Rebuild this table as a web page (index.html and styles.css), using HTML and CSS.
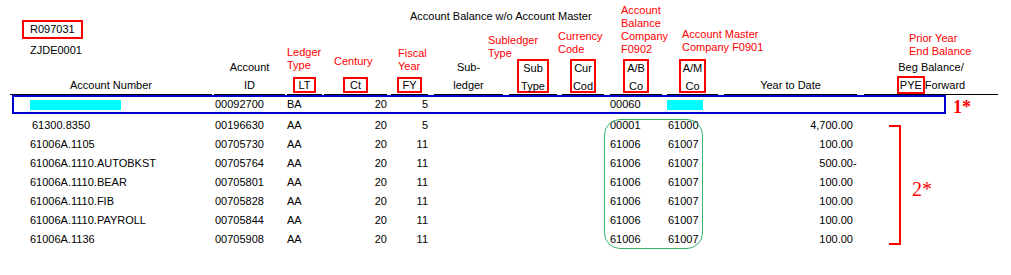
FILE: index.html
```html
<!DOCTYPE html>
<html>
<head>
<meta charset="utf-8">
<title>Account Balance w/o Account Master</title>
<link rel="stylesheet" href="styles.css">
</head>
<body>
<div class="page">
  <div class="hdr">
    <div class="hc c1">
      <div class="pbox">R097031</div>
      <div class="env">ZJDE0001</div>
      <div class="lbl">Account Number</div>
    </div>
    <div class="hc c2">
      <div class="lbl"><div>Account</div><div>ID</div></div>
    </div>
    <div class="hc c3">
      <div class="note n-lt">Ledger<br>Type</div>
      <div class="lbl"><span class="box1">LT</span></div>
    </div>
    <div class="hc c4">
      <div class="note n-ct">Century</div>
      <div class="lbl"><span class="box1 wide">Ct</span></div>
    </div>
    <div class="hc c5">
      <div class="title">Account Balance w/o Account Master</div>
      <div class="note n-fy">Fiscal<br>Year</div>
      <div class="lbl"><span class="box1">FY</span></div>
    </div>
    <div class="hc c6">
      <div class="lbl"><div>Sub-</div><div>ledger</div></div>
    </div>
    <div class="hc c7">
      <div class="note n-st">Subledger<br>Type</div>
      <div class="lbl"><span class="box2"><span class="bl">Sub</span><span class="bl">Type</span></span></div>
    </div>
    <div class="hc c8">
      <div class="note n-cc">Currency<br>Code</div>
      <div class="lbl"><span class="box2 tight"><span class="bl">Cur</span><span class="bl">Cod</span></span></div>
    </div>
    <div class="hc c9">
      <div class="note n-ab">Account<br>Balance<br>Company<br>F0902</div>
      <div class="lbl"><span class="box2"><span class="bl">A/B</span><span class="bl">Co</span></span></div>
    </div>
    <div class="hc c10">
      <div class="note n-am">Account Master<br>Company F0901</div>
      <div class="lbl"><span class="box2"><span class="bl">A/M</span><span class="bl">Co</span></span></div>
    </div>
    <div class="hc c11">
      <div class="lbl">Year to Date</div>
    </div>
    <div class="hc c12">
      <div class="note n-py">Prior Year<br>End Balance</div>
      <div class="lbl"><div>Beg Balance/</div><div class="pye-line"><span class="box-pye">PYE</span>Forward</div></div>
    </div>
  </div>

  <div class="hl-wrap">
    <div class="row row-hl">
      <div class="c c1 acct"><span class="redact wide-bar"></span></div>
      <div class="c c2 id">00092700</div>
      <div class="c c3">BA</div>
      <div class="c c4 r">20</div>
      <div class="c c5 r">5</div>
      <div class="c c6"></div>
      <div class="c c7"></div>
      <div class="c c8"></div>
      <div class="c c9">00060</div>
      <div class="c c10"><span class="redact short-bar"></span></div>
    </div>
    <span class="mark m1">1*</span>
  </div>

  <div class="body-area">
    <div class="rows">
      <div class="row">
        <div class="c c1 acct ind">61300.8350</div>
        <div class="c c2 id">00196630</div>
        <div class="c c3">AA</div>
        <div class="c c4 r">20</div>
        <div class="c c5 r">5</div>
        <div class="c c6"></div>
        <div class="c c7"></div>
        <div class="c c8"></div>
        <div class="c c9">00001</div>
        <div class="c c10 am">61000</div>
        <div class="c c11 r">4,700.00<span class="sign"></span></div>
      </div>
      <div class="row">
        <div class="c c1 acct">61006A.1105</div>
        <div class="c c2 id">00705730</div>
        <div class="c c3">AA</div>
        <div class="c c4 r">20</div>
        <div class="c c5 r">11</div>
        <div class="c c6"></div>
        <div class="c c7"></div>
        <div class="c c8"></div>
        <div class="c c9">61006</div>
        <div class="c c10 am">61007</div>
        <div class="c c11 r">100.00<span class="sign"></span></div>
      </div>
      <div class="row">
        <div class="c c1 acct">61006A.1110.AUTOBKST</div>
        <div class="c c2 id">00705764</div>
        <div class="c c3">AA</div>
        <div class="c c4 r">20</div>
        <div class="c c5 r">11</div>
        <div class="c c6"></div>
        <div class="c c7"></div>
        <div class="c c8"></div>
        <div class="c c9">61006</div>
        <div class="c c10 am">61007</div>
        <div class="c c11 r">500.00<span class="sign">-</span></div>
      </div>
      <div class="row">
        <div class="c c1 acct">61006A.1110.BEAR</div>
        <div class="c c2 id">00705801</div>
        <div class="c c3">AA</div>
        <div class="c c4 r">20</div>
        <div class="c c5 r">11</div>
        <div class="c c6"></div>
        <div class="c c7"></div>
        <div class="c c8"></div>
        <div class="c c9">61006</div>
        <div class="c c10 am">61007</div>
        <div class="c c11 r">100.00<span class="sign"></span></div>
      </div>
      <div class="row">
        <div class="c c1 acct">61006A.1110.FIB</div>
        <div class="c c2 id">00705828</div>
        <div class="c c3">AA</div>
        <div class="c c4 r">20</div>
        <div class="c c5 r">11</div>
        <div class="c c6"></div>
        <div class="c c7"></div>
        <div class="c c8"></div>
        <div class="c c9">61006</div>
        <div class="c c10 am">61007</div>
        <div class="c c11 r">100.00<span class="sign"></span></div>
      </div>
      <div class="row">
        <div class="c c1 acct">61006A.1110.PAYROLL</div>
        <div class="c c2 id">00705844</div>
        <div class="c c3">AA</div>
        <div class="c c4 r">20</div>
        <div class="c c5 r">11</div>
        <div class="c c6"></div>
        <div class="c c7"></div>
        <div class="c c8"></div>
        <div class="c c9">61006</div>
        <div class="c c10 am">61007</div>
        <div class="c c11 r">100.00<span class="sign"></span></div>
      </div>
      <div class="row">
        <div class="c c1 acct">61006A.1136</div>
        <div class="c c2 id">00705908</div>
        <div class="c c3">AA</div>
        <div class="c c4 r">20</div>
        <div class="c c5 r">11</div>
        <div class="c c6"></div>
        <div class="c c7"></div>
        <div class="c c8"></div>
        <div class="c c9">61006</div>
        <div class="c c10 am">61007</div>
        <div class="c c11 r">100.00<span class="sign"></span></div>
      </div>
    </div>
    <div class="bracket"></div>
    <span class="mark m2">2*</span>
    <div class="green-ring"></div>
  </div>
</div>
</body>
</html>
```
FILE: styles.css
```css
html, body {
  margin: 0;
  padding: 0;
  background: #fff;
}

body {
  font-family: "Liberation Sans", Arial, sans-serif;
  font-size: 11px;
  color: #000;
}

.page {
  padding: 4px 0 0 10px;
}

/* column grid */
.c1, .c2, .c3, .c4, .c5, .c6, .c7, .c8, .c9, .c10, .c11, .c12 {
  flex: none;
}
.c1 { width: 202px; margin-right: 2px; }
.c2 { width: 71px; margin-right: 2px; }
.c3 { width: 35px; margin-right: 2px; }
.c4 { width: 63px; margin-right: 4px; }
.c5 { width: 37px; margin-right: 6px; }
.c6 { width: 69px; margin-right: 6px; }
.c7 { width: 48px; margin-right: 5px; }
.c8 { width: 42px; margin-right: 6px; }
.c9 { width: 52px; margin-right: 5px; }
.c10 { width: 51px; margin-right: 6px; }
.c11 { width: 133px; margin-right: 7px; }
.c12 { width: 134px; }

/* header */
.hdr {
  display: flex;
  align-items: stretch;
}

.hc {
  display: flex;
  flex-direction: column;
  justify-content: flex-end;
}

.lbl {
  text-align: center;
  line-height: 18px;
  border-bottom: 1px solid #000;
  white-space: nowrap;
}

.pbox {
  width: fit-content;
  margin: 0 0 5px 12px;
  border: 2px solid #f00;
  padding: 0 6px;
  line-height: 15px;
}

.env {
  line-height: 13px;
  margin: 0 0 19px 20px;
}

.title {
  line-height: 13px;
  margin: 0 0 24px 19px;
  white-space: nowrap;
}

.note {
  color: #f00;
  line-height: 13px;
  white-space: nowrap;
}
.n-lt { margin: 0 0 4px 0; }
.n-ct { margin: 0 0 8px 10px; }
.n-fy { margin: 0 0 3px 7px; }
.n-st { margin: 0 0 -2px -21px; }
.n-cc { margin: 0 0 2px -4px; }
.n-ab { margin: 0 0 2px 11px; }
.n-am { margin: 0 0 4px 15px; }
.n-py { margin: 0 0 0 45px; }

.box1 {
  display: block;
  width: fit-content;
  margin: 1px auto;
  border: 2px solid #f00;
  line-height: 12px;
  padding: 0 3px;
}
.box1.wide { padding: 0 5px; }

.box2 {
  display: block;
  width: fit-content;
  height: 30px;
  margin: 1px auto;
  border: 2px solid #f00;
  line-height: 18px;
  padding: 0 2px;
}
.box2.tight { padding: 0 1px; }

.bl {
  display: block;
}
.bl:first-child {
  margin-top: -2px;
}

.pye-line {
  height: 18px;
}

.box-pye {
  display: inline-block;
  border: 2px solid #f00;
  line-height: 14px;
  padding: 0 1px;
  vertical-align: top;
}

/* rows */
.row {
  display: flex;
  height: 19px;
  line-height: 19px;
  white-space: nowrap;
}

.r { text-align: right; }
.acct { padding-left: 20px; box-sizing: border-box; }
.acct.ind { padding-left: 22px; }
.id { padding-left: 1px; box-sizing: border-box; }
.am { padding-left: 1px; box-sizing: border-box; }

.sign {
  display: inline-block;
  width: 4px;
  text-align: left;
}

.hl-wrap {
  display: flex;
  align-items: flex-start;
  margin-left: 2px;
}

.row.row-hl {
  box-sizing: border-box;
  width: 934px;
  height: 19px;
  line-height: 15px;
  border: 2px solid #0000d0;
}
.row-hl .c1 {
  width: 198px;
  padding-left: 16px;
}

.redact {
  display: inline-block;
  height: 10px;
  background: #00ffff;
  vertical-align: middle;
}
.wide-bar { width: 91px; }
.short-bar { width: 36px; }

.mark {
  color: #f00;
  font-family: "Liberation Serif", "Times New Roman", serif;
  white-space: nowrap;
}
.m1 {
  font-size: 18px;
  font-weight: bold;
  line-height: 18px;
  margin: 3px 0 0 7px;
}
.m2 {
  font-size: 20px;
  line-height: 20px;
  margin: 63px 0 0 11px;
}

.body-area {
  position: relative;
  display: flex;
  align-items: flex-start;
}

.rows {
  display: flex;
  flex-direction: column;
}

.bracket {
  box-sizing: border-box;
  width: 12px;
  height: 120px;
  margin: 9px 0 0 25px;
  border: 2px solid #f00;
  border-left: none;
}

.green-ring {
  position: absolute;
  left: 594px;
  top: 3px;
  width: 99px;
  height: 130px;
  box-sizing: border-box;
  border: 1px solid #3cb371;
  border-radius: 16px;
}
```
